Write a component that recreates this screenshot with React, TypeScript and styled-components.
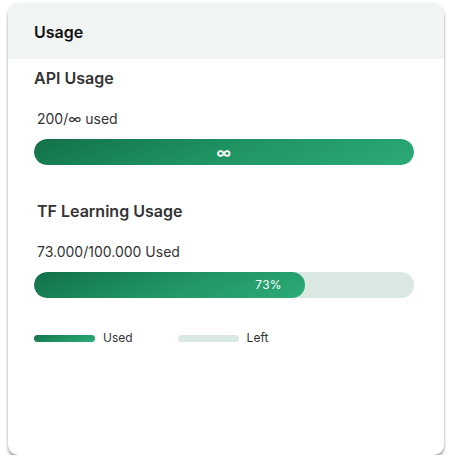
import React from "react";
import { createGlobalStyle, styled } from "styled-components";

const GlobalStyle = createGlobalStyle`
  html, body {
    margin: 0;
    padding: 0;
    background: #ffffff;
    font-family: Inter, "Noto Sans", sans-serif;
  }
`;

const GRADIENT = "linear-gradient(160deg, #13704a 0%, #1f9462 50%, #2cab78 100%)";

type Meter = {
  title: string;
  caption: string;
  percent: number;
  label: string;
};

const meters: Meter[] = [
  { title: "API Usage", caption: "200/∞ used", percent: 100, label: "∞" },
  { title: "TF Learning Usage", caption: "73.000/100.000 Used", percent: 71.3, label: "73%" },
];

const App = (): React.ReactNode => {
  return (
    <>
      <GlobalStyle />
      <Card>
        <Header>Usage</Header>
        <Body>
          {meters.map((m, i) => (
            <Section key={m.title} $first={i === 0}>
              <Title $indent={i === 0 ? 0 : 3}>{m.title}</Title>
              <Caption>{m.caption}</Caption>
              <Track>
                <Fill style={{ width: `${m.percent}%` }} $full={m.percent === 100}>
                  <FillLabel $infinite={m.label === "∞"}>{m.label}</FillLabel>
                </Fill>
              </Track>
            </Section>
          ))}
          <Legend>
            <LegendItem>
              <Swatch $used />
              <LegendLabel>Used</LegendLabel>
            </LegendItem>
            <LegendItem>
              <Swatch $used={false} />
              <LegendLabel>Left</LegendLabel>
            </LegendItem>
          </Legend>
        </Body>
      </Card>
    </>
  );
};

const Card = styled.div`
  margin: 4px 8px 0;
  width: 436px;
  height: 451px;
  box-sizing: border-box;
  background: #ffffff;
  border-radius: 10px;
  overflow: hidden;
  box-shadow: 0 3px 3px rgba(0, 0, 0, 0.32), 0 0 3px rgba(0, 0, 0, 0.12);
`;
const Header = styled.div`
  height: 55px;
  display: flex;
  align-items: center;
  padding: 1px 0 0 26px;
  box-sizing: border-box;
  background: #f0f5f3;
  font-size: 16px;
  font-weight: 600;
  color: #111111;
`;
const Body = styled.div`
  display: flex;
  flex-direction: column;
  padding: 0 30px 0 26px;
`;
const Section = styled.div<{ $first: boolean }>`
  display: flex;
  flex-direction: column;
  margin-top: ${({ $first }) => ($first ? "9px" : "36px")};
`;
const Title = styled.div<{ $indent: number }>`
  font-size: 16px;
  line-height: 20px;
  font-weight: 600;
  color: #333333;
  padding-left: ${({ $indent }) => $indent}px;
  margin-bottom: 22px;
`;
const Caption = styled.div`
  font-size: 14px;
  line-height: 18px;
  color: #333333;
  padding-left: 3px;
  margin-bottom: 11px;
`;
const Track = styled.div`
  height: 26px;
  border-radius: 13px;
  background: #d9e8e1;
  overflow: hidden;
  display: flex;
`;
const Fill = styled.div<{ $full: boolean }>`
  height: 100%;
  border-radius: 13px;
  background: ${GRADIENT};
  display: flex;
  align-items: center;
  justify-content: ${({ $full }) => ($full ? "center" : "flex-end")};
  padding-right: ${({ $full }) => ($full ? "0" : "23px")};
  box-sizing: border-box;
`;
const FillLabel = styled.span<{ $infinite: boolean }>`
  color: #ffffff;
  font-size: ${({ $infinite }) => ($infinite ? "15px" : "12px")};
  font-weight: ${({ $infinite }) => ($infinite ? 600 : 400)};
  line-height: 1;
  letter-spacing: 0.3px;
`;
const Legend = styled.div`
  display: flex;
  gap: 45px;
  margin-top: 32px;
`;
const LegendItem = styled.div`
  display: flex;
  align-items: center;
  gap: 8px;
`;
const Swatch = styled.span<{ $used: boolean }>`
  width: 61px;
  height: 7px;
  border-radius: 4px;
  background: ${({ $used }) => ($used ? GRADIENT : "#d9e8e1")};
`;
const LegendLabel = styled.span`
  font-size: 12px;
  line-height: 16px;
  color: #333333;
`;

export default App;
